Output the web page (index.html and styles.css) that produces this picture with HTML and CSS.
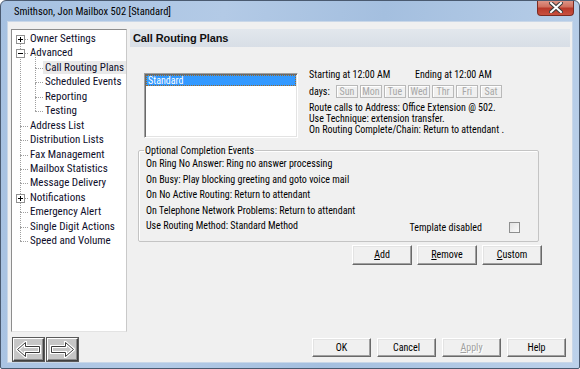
FILE: index.html
```html
<!DOCTYPE html>
<html lang="en">
<head>
  <meta charset="UTF-8">
  <title>Smithson, Jon Mailbox 502 [Standard]</title>
  <link rel="stylesheet" href="styles.css">
</head>
<body>

<div class="window">
  <div class="titlebar">
    <span class="title">Smithson, Jon Mailbox 502 [Standard]</span>
    <span class="close">
      <svg width="14" height="11" viewBox="0 0 14 11">
        <path d="M2 1 L12 10 M12 1 L2 10" stroke="#3b3b3b" stroke-width="4" stroke-linecap="square"/>
        <path d="M2 1 L12 10 M12 1 L2 10" stroke="#fff" stroke-width="2" stroke-linecap="square"/>
      </svg>
    </span>
  </div>

  <div class="client">
    <div class="main">
      <ul class="tree">
        <li><span class="exp"><svg width="9" height="9" viewBox="0 0 9 9"><rect x="0.5" y="0.5" width="8" height="8" fill="#fff" stroke="#919191"/><path d="M2 4.5 H7 M4.5 2 V7" stroke="#000"/></svg></span><span class="label">Owner Settings</span></li>
        <li><span class="exp"><svg width="9" height="9" viewBox="0 0 9 9"><rect x="0.5" y="0.5" width="8" height="8" fill="#fff" stroke="#919191"/><path d="M2 4.5 H7" stroke="#000"/></svg></span><span class="label">Advanced</span>
          <ul>
            <li><span class="label selected">Call Routing Plans</span></li>
            <li><span class="label">Scheduled Events</span></li>
            <li><span class="label">Reporting</span></li>
            <li><span class="label">Testing</span></li>
          </ul>
        </li>
        <li><span class="label">Address List</span></li>
        <li><span class="label">Distribution Lists</span></li>
        <li><span class="label">Fax Management</span></li>
        <li><span class="label">Mailbox Statistics</span></li>
        <li><span class="label">Message Delivery</span></li>
        <li><span class="exp"><svg width="9" height="9" viewBox="0 0 9 9"><rect x="0.5" y="0.5" width="8" height="8" fill="#fff" stroke="#919191"/><path d="M2 4.5 H7 M4.5 2 V7" stroke="#000"/></svg></span><span class="label">Notifications</span></li>
        <li><span class="label">Emergency Alert</span></li>
        <li><span class="label">Single Digit Actions</span></li>
        <li><span class="label">Speed and Volume</span></li>
      </ul>

      <div class="panel">
        <div class="panel-head">Call Routing Plans</div>

        <div class="plan-row">
          <div class="listbox">
            <div class="list-item selected">Standard</div>
          </div>
          <div class="plan-info">
            <div class="times">
              <span class="start">Starting at 12:00 AM</span>
              <span>Ending at 12:00 AM</span>
            </div>
            <div class="days">
              <span class="days-label">days:</span>
              <span class="day">Sun</span>
              <span class="day">Mon</span>
              <span class="day">Tue</span>
              <span class="day">Wed</span>
              <span class="day">Thr</span>
              <span class="day">Fri</span>
              <span class="day">Sat</span>
            </div>
            <div class="route">
              <div>Route calls to Address: Office Extension @ 502.</div>
              <div>Use Technique: extension transfer.</div>
              <div>On Routing Complete/Chain: Return to attendant .</div>
            </div>
          </div>
        </div>

        <fieldset class="events">
          <legend>Optional Completion Events</legend>
          <div class="event">On Ring No Answer: Ring no answer processing</div>
          <div class="event">On Busy: Play blocking greeting and goto voice mail</div>
          <div class="event">On No Active Routing: Return to attendant</div>
          <div class="event">On Telephone Network Problems: Return to attendant</div>
          <div class="event last">
            <span class="method">Use Routing Method: Standard Method</span>
            <span class="template">Template disabled</span>
            <span class="checkbox"></span>
          </div>
        </fieldset>

        <div class="plan-buttons">
          <button class="btn"><u>A</u>dd</button>
          <button class="btn"><u>R</u>emove</button>
          <button class="btn"><u>C</u>ustom</button>
        </div>
      </div>
    </div>

    <div class="footer">
      <div class="nav">
        <button class="nav-btn">
          <svg width="25" height="17" viewBox="0 0 25 17">
            <path d="M1.5 8.5 L9.5 1.5 V5.5 H23.5 V11.5 H9.5 V15.5 Z" fill="none" stroke="#fff" stroke-width="3" stroke-linejoin="miter"/>
            <path d="M1.5 8.5 L9.5 1.5 V5.5 H23.5 V11.5 H9.5 V15.5 Z" fill="none" stroke="#3a3a3a" stroke-width="1"/>
          </svg>
        </button>
        <button class="nav-btn">
          <svg width="25" height="17" viewBox="0 0 25 17">
            <path d="M23.5 8.5 L15.5 1.5 V5.5 H1.5 V11.5 H15.5 V15.5 Z" fill="none" stroke="#fff" stroke-width="3" stroke-linejoin="miter"/>
            <path d="M23.5 8.5 L15.5 1.5 V5.5 H1.5 V11.5 H15.5 V15.5 Z" fill="none" stroke="#3a3a3a" stroke-width="1"/>
          </svg>
        </button>
      </div>
      <div class="dialog-buttons">
        <button class="btn">OK</button>
        <button class="btn">Cancel</button>
        <button class="btn" disabled><u>A</u>pply</button>
        <button class="btn">Help</button>
      </div>
    </div>
  </div>
</div>

</body>
</html>
```

FILE: styles.css
```css
body {
  margin: 0;
  font-family: "Roboto Condensed", "Liberation Sans", Arial, sans-serif;
  font-size: 10px;
  color: #000;
  background: #fff;
}

.window {
  width: 580px;
  height: 369px;
  box-sizing: border-box;
  border: 1px solid #4a5a70;
  border-radius: 6px 6px 2px 2px;
  padding: 0 7px 6px 7px;
  background: linear-gradient(100deg, #a6c1e1 0%, #b3cae6 35%, #a4bfdf 60%, #bcd1ea 100%);
  display: flex;
  flex-direction: column;
  overflow: hidden;
}

/* title bar */
.titlebar {
  height: 21px;
  display: flex;
  justify-content: space-between;
  align-items: flex-start;
  margin: 0 -2px 0 -1px;
}
.title {
  font-size: 10.5px;
  line-height: 21px;
  padding-left: 7px;
  color: #000;
}
.close {
  width: 37px;
  height: 16px;
  box-sizing: border-box;
  margin-top: -1px;
  border: 1px solid #7b2b22;
  border-top: none;
  border-radius: 0 0 4px 4px;
  background: linear-gradient(#e09a8c 0%, #d0705f 45%, #b8392a 55%, #c9503f 100%);
  display: flex;
  align-items: center;
  justify-content: center;
}

/* client area */
.client {
  height: 340px;
  box-sizing: border-box;
  background: #f0f0f0;
  box-shadow: 0 0 0 1px #c9d7e8;
  padding: 7px 2px 1px 3px;
  display: flex;
  flex-direction: column;
}
.main {
  height: 303px;
  display: flex;
}

/* tree */
.tree {
  width: 116px;
  box-sizing: border-box;
  margin: 0;
  padding: 2px 0 0 0;
  list-style: none;
  background: #fff;
  border: 1px solid #8d8d8d;
  border-right-color: #c9c9c9;
  border-bottom-color: #e3e3e3;
  color: #0e0e2a;
  font-size: 11px;
}
.tree ul {
  margin: 0;
  padding: 0;
  list-style: none;
}
.tree li {
  position: relative;
  line-height: 14.43px;
  white-space: nowrap;
}
.tree li::before {
  content: "";
  position: absolute;
  left: 8px;
  top: 7px;
  width: 8px;
  border-top: 1px dotted #a0a0a0;
}
.tree li::after {
  content: "";
  position: absolute;
  left: 8px;
  top: 7px;
  height: 100%;
  border-left: 1px dotted #a0a0a0;
}
.tree > li:last-child::after {
  display: none;
}
.tree > li > .label {
  margin-left: 16px;
}
.tree ul li::before {
  left: 23px;
}
.tree ul li::after {
  left: 23px;
  top: -7px;
  height: 100%;
}
.tree ul li:last-child::after {
  height: 14px;
}
.label {
  padding: 0 2px;
}
.label.selected {
  background: #e9e9e9;
}
.tree ul .label {
  margin-left: 31px;
}
.exp {
  position: absolute;
  left: 4px;
  top: 3px;
  width: 9px;
  height: 9px;
  z-index: 1;
  line-height: 0;
}

/* right panel */
.panel {
  flex: 1;
  margin-left: 3px;
  display: flex;
  flex-direction: column;
}
.panel-head {
  height: 18px;
  line-height: 18px;
  padding-left: 3px;
  background: linear-gradient(#e2e7ed, #d8dee6);
  font-family: "Liberation Sans", Arial, sans-serif;
  font-weight: bold;
  font-size: 11px;
  letter-spacing: -0.1px;
  color: #101010;
}

.plan-row {
  display: flex;
  margin-top: 22px;
  padding-left: 14px;
}
.listbox {
  width: 154px;
  height: 65px;
  box-sizing: border-box;
  margin-top: 4px;
  background: #fff;
  border: 1px solid;
  border-color: #a0a0a0 #fff #fff #a0a0a0;
  box-shadow: inset 1px 1px 0 #696969, inset -1px -1px 0 #e3e3e3;
  padding: 1px 1px 0 1px;
}
.list-item {
  height: 11px;
  line-height: 11px;
  padding-left: 2px;
}
.list-item.selected {
  background: #3399ff;
  color: #fff;
  outline: 1px dotted #9a6a2a;
  outline-offset: -1px;
}

.plan-info {
  margin-left: 11px;
}
.times {
  line-height: 12px;
  display: flex;
}
.start {
  width: 106px;
}
.days {
  display: flex;
  align-items: center;
  gap: 2px;
  margin-top: 4px;
  height: 13px;
}
.days-label {
  width: 25px;
}
.day {
  width: 22px;
  height: 13px;
  box-sizing: border-box;
  border: 1px solid #b9b9b9;
  box-shadow: inset 1px 1px 0 #fff;
  text-align: center;
  line-height: 11px;
  color: #a7a7a7;
}
.route {
  margin-top: 4px;
  line-height: 11px;
}

/* events group */
.events {
  width: 401px;
  box-sizing: border-box;
  margin: 8px 0 0 8px;
  padding: 0 18px 7px 7px;
  border: 1px solid #c4c4c4;
  border-radius: 2px;
  box-shadow: inset 1px 1px 0 #fff;
}
.events legend {
  padding: 0 1px;
  margin-left: -2px;
  line-height: 9px;
}
.event {
  line-height: 15.6px;
}
.event:first-of-type {
  margin-top: 1px;
}
.event.last {
  display: flex;
  align-items: flex-start;
  height: 15.6px;
}
.method {
  flex: 1;
}
.template {
  margin-top: 2px;
  margin-right: 2px;
}
.checkbox {
  width: 11px;
  height: 11px;
  box-sizing: border-box;
  margin: 4px 0 0 25px;
  border: 1px solid #8e8f8f;
  background: linear-gradient(135deg, #e2e2e2, #fbfbfb);
}

/* buttons */
.btn {
  width: 60px;
  height: 20px;
  padding: 0;
  font-family: "Roboto Condensed", "Liberation Sans", Arial, sans-serif;
  font-size: 10px;
  color: #000;
  background: #f0f0f0;
  border: 1px solid;
  border-color: #fff #696969 #696969 #fff;
  box-shadow: inset -1px -1px 0 #a0a0a0, inset 1px 1px 0 #e3e3e3;
}
.btn u {
  text-decoration: underline;
}
.btn:disabled {
  color: #a0a0a0;
  text-shadow: 1px 1px 0 #fff;
}
.plan-buttons {
  display: flex;
  justify-content: flex-end;
  gap: 5px;
  margin-top: 3px;
  padding-right: 28px;
}

/* footer */
.footer {
  margin-top: 6px;
  display: flex;
  justify-content: space-between;
  align-items: flex-start;
  padding: 0 4px 0 2px;
}
.nav {
  display: flex;
  gap: 3px;
}
.nav-btn {
  width: 31px;
  height: 23px;
  padding: 0;
  background: #c6c6c6;
  border: 1px solid;
  border-color: #fff #404040 #404040 #fff;
  box-shadow: inset -1px -1px 0 #8a8a8a, 0 0 0 1px #5a5a5a;
  display: flex;
  align-items: center;
  justify-content: center;
}
.dialog-buttons {
  display: flex;
  gap: 6px;
}
.dialog-buttons .btn {
  width: 59px;
  height: 19px;
}
```
